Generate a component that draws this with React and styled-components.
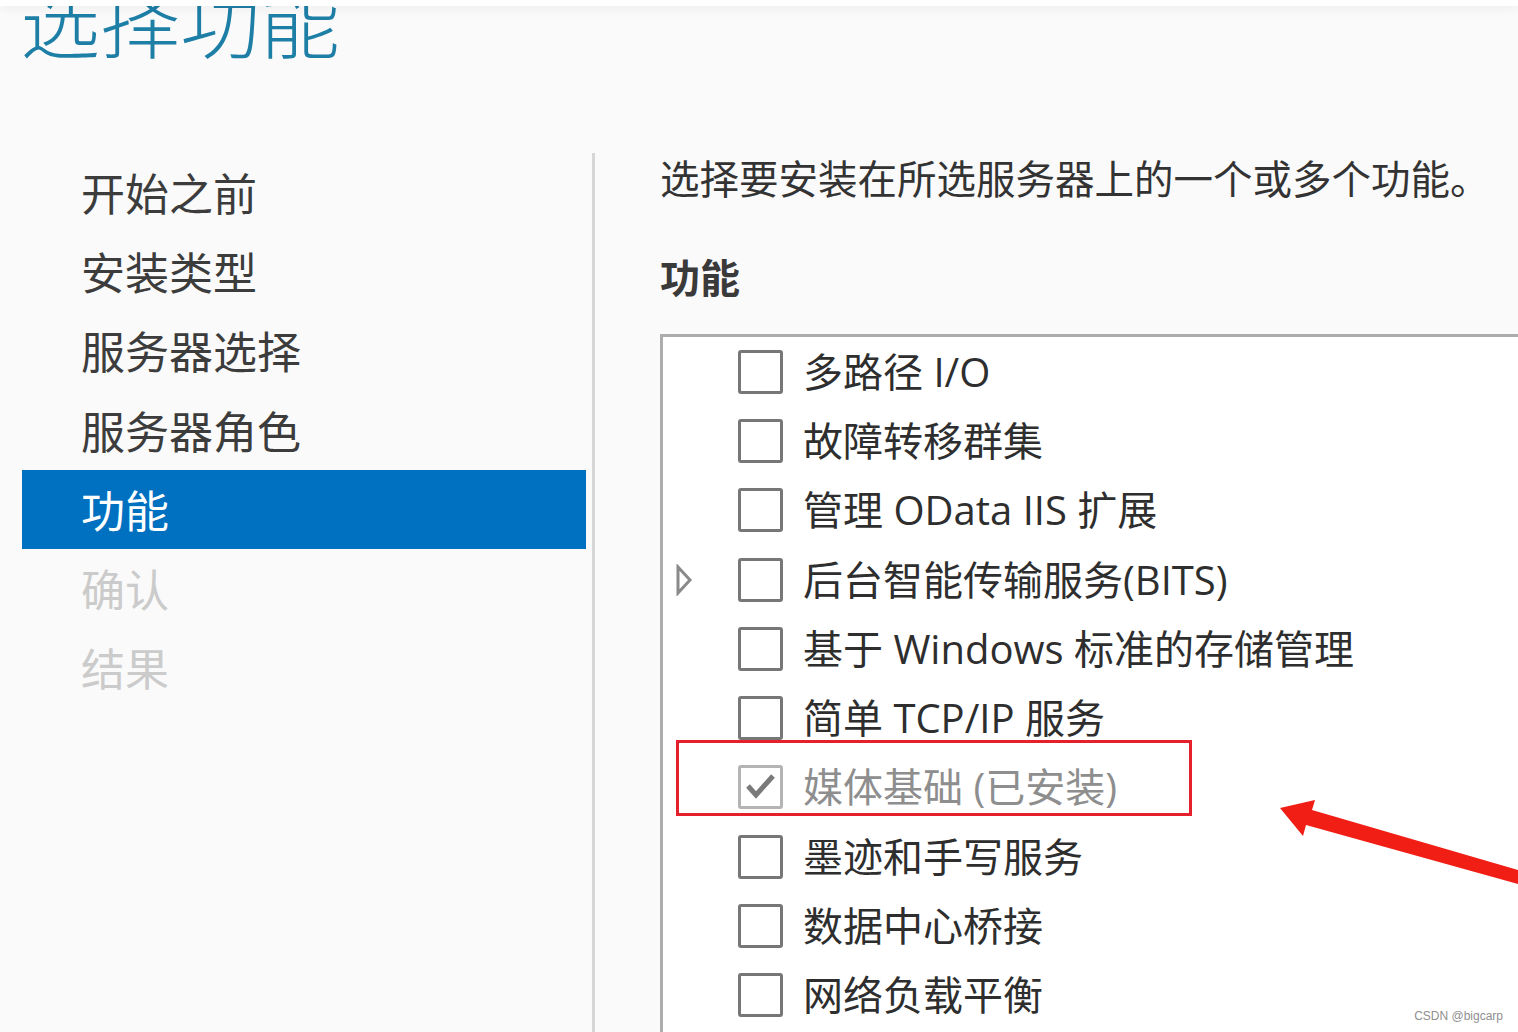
import React from "react";
import styled, { createGlobalStyle } from "styled-components";

const GlobalStyle = createGlobalStyle`
  html, body { margin: 0; padding: 0; background: #fafafa; }
  body { overflow: hidden; }
  * { box-sizing: border-box; }
`;

const FONT = `"Open Sans", "Noto Sans CJK SC", "Noto Sans", sans-serif`;

const Page = styled.div`
  position: relative;
  width: 1518px;
  height: 1032px;
  overflow: hidden;
  background: #fafafa;
  display: flex;
  flex-direction: column;
  font-family: ${FONT};
`;

const TopStrip = styled.div`
  position: relative;
  z-index: 2;
  height: 6px;
  flex: none;
  background: #ffffff;
  box-shadow: 0 3px 8px rgba(0, 0, 0, 0.06);
`;

const Header = styled.header`
  height: 147px;
  flex: none;
  overflow: hidden;
  padding-left: 20px;
`;

const Title = styled.h1`
  margin: -29px 0 0 0;
  font-family: "Noto Sans CJK SC", sans-serif;
  font-size: 80px;
  line-height: 1;
  font-weight: 300;
  color: #1d7ea6;
  letter-spacing: 0;
`;

const Body = styled.div`
  flex: 1;
  display: flex;
  min-height: 0;
`;

const Nav = styled.nav`
  width: 592px;
  flex: none;
  display: flex;
  flex-direction: column;
`;

const NavItem = styled.div`
  height: 79.3px;
  margin-left: 22px;
  width: 564px;
  padding-left: 59px;
  padding-bottom: 2px;
  display: flex;
  align-items: center;
  font-family: "Noto Sans CJK SC", sans-serif;
  font-size: 44px;
  color: ${(p) => (p.$active ? "#ffffff" : p.$disabled ? "#cbcbcb" : "#3c3c3c")};
  background: ${(p) => (p.$active ? "#0070c0" : "transparent")};
`;

const Content = styled.section`
  flex: 1;
  display: flex;
  flex-direction: column;
  border-left: 3px solid #d6d6d6;
  padding-left: 65px;
  padding-top: 0;
  min-width: 0;
`;

const Description = styled.p`
  margin: 0;
  font-family: "Noto Sans CJK SC", sans-serif;
  font-size: 39.5px;
  line-height: 48px;
  color: #333333;
  white-space: nowrap;
`;

const SectionTitle = styled.h2`
  margin: 51px 0 0 0;
  font-family: "Noto Sans CJK SC", sans-serif;
  font-size: 40px;
  line-height: 48px;
  font-weight: 700;
  color: #3a3a3a;
`;

const ListBox = styled.div`
  margin-top: 34px;
  flex: 1;
  background: #ffffff;
  border-top: 3px solid #acacac;
  border-left: 3px solid #acacac;
  padding-top: 0;
  display: flex;
  flex-direction: column;
`;

const Row = styled.div`
  position: relative;
  height: 69.3px;
  flex: none;
  display: flex;
  align-items: center;
  padding-left: 12px;
`;

const ExpanderCell = styled.div`
  width: 63px;
  flex: none;
  display: flex;
  align-items: center;
`;

const CheckBox = styled.div`
  width: 45px;
  height: 44px;
  flex: none;
  border: 3px solid ${(p) => (p.$dim ? "#b4b4b4" : "#777777")};
  border-radius: 3px;
  background: #ffffff;
  display: flex;
  align-items: center;
  justify-content: center;
`;

const Label = styled.span`
  margin-left: 20px;
  font-size: 40px;
  line-height: 1;
  color: ${(p) => (p.$dim ? "#8e8e8e" : "#2e2e2e")};
  white-space: nowrap;
`;

const Highlight = styled.div`
  position: absolute;
  left: 13px;
  top: -13px;
  width: 516px;
  height: 76px;
  border: 3px solid #e4202c;
  pointer-events: none;
`;

const ArrowOverlay = styled.svg`
  position: absolute;
  left: 0;
  top: 0;
  pointer-events: none;
`;

const Watermark = styled.div`
  position: absolute;
  right: 15px;
  bottom: 9px;
  font-family: "Liberation Sans", Arial, sans-serif;
  font-size: 12px;
  color: #8f8f8f;
`;

const Expander = () => (
  <svg width="18" height="32" viewBox="0 0 18 32">
    <path d="M3 3 L15 16 L3 29 Z" fill="none" stroke="#8a8a8a" strokeWidth="3" strokeLinejoin="miter" />
  </svg>
);

const Check = () => (
  <svg width="32" height="30" viewBox="0 0 32 30">
    <polyline points="3,14 11,23 28,4" fill="none" stroke="#7a7a7a" strokeWidth="5" />
  </svg>
);

const navItems = [
  { label: "开始之前" },
  { label: "安装类型" },
  { label: "服务器选择" },
  { label: "服务器角色" },
  { label: "功能", active: true },
  { label: "确认", disabled: true },
  { label: "结果", disabled: true },
];

const features = [
  { label: "多路径 I/O" },
  { label: "故障转移群集" },
  { label: "管理 OData IIS 扩展" },
  { label: "后台智能传输服务(BITS)", expandable: true },
  { label: "基于 Windows 标准的存储管理" },
  { label: "简单 TCP/IP 服务" },
  { label: "媒体基础 (已安装)", installed: true },
  { label: "墨迹和手写服务" },
  { label: "数据中心桥接" },
  { label: "网络负载平衡" },
];

export default function App() {
  return (
    <>
      <GlobalStyle />
      <Page>
        <TopStrip />
        <Header>
          <Title>选择功能</Title>
        </Header>
        <Body>
          <Nav>
            {navItems.map((n) => (
              <NavItem key={n.label} $active={n.active} $disabled={n.disabled}>
                {n.label}
              </NavItem>
            ))}
          </Nav>
          <Content>
            <Description>选择要安装在所选服务器上的一个或多个功能。</Description>
            <SectionTitle>功能</SectionTitle>
            <ListBox>
              {features.map((f) => (
                <Row key={f.label}>
                  <ExpanderCell>{f.expandable && <Expander />}</ExpanderCell>
                  <CheckBox $dim={f.installed}>{f.installed && <Check />}</CheckBox>
                  <Label $dim={f.installed}>{f.label}</Label>
                  {f.installed && <Highlight />}
                </Row>
              ))}
            </ListBox>
          </Content>
        </Body>
        <ArrowOverlay width="1518" height="1032" viewBox="0 0 1518 1032">
          <polygon
            points="1280,808 1315,800 1312,810 1518,870 1518,884 1306,825 1303,836"
            fill="#f01e14"
          />
        </ArrowOverlay>
        <Watermark>CSDN @bigcarp</Watermark>
      </Page>
    </>
  );
}
